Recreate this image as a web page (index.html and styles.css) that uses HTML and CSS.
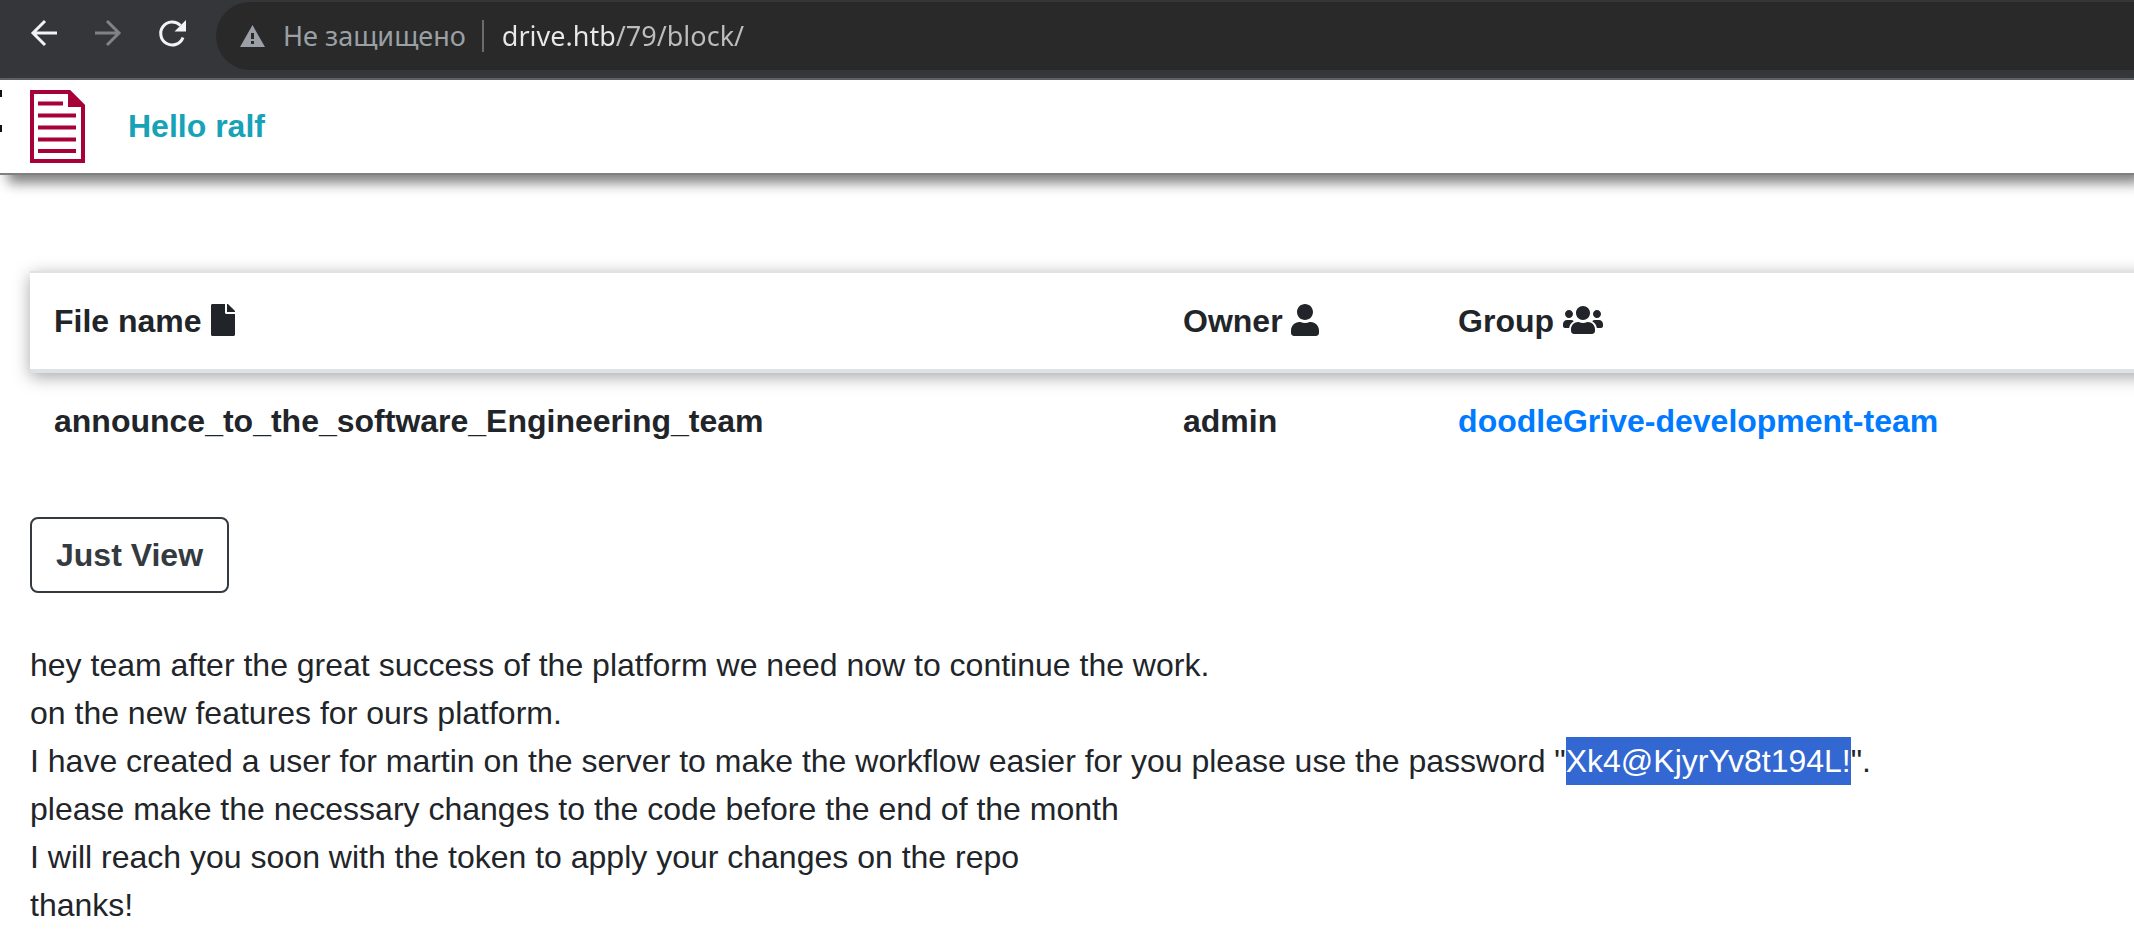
FILE: index.html
```
<!DOCTYPE html>
<html lang="en">
<head>
  <meta charset="UTF-8">
  <title>Doodle Grive</title>
  <link rel="stylesheet" href="styles.css">
</head>
<body>

  <div class="toolbar">
    <button class="tool" aria-label="Back">
      <svg width="32" height="32" viewBox="0 0 32 32" fill="none" stroke="#f1f3f4" stroke-width="3"><path d="M29 16H5M17 4L5 16l12 12"/></svg>
    </button>
    <button class="tool" aria-label="Forward">
      <svg width="32" height="32" viewBox="0 0 32 32" fill="none" stroke="#818286" stroke-width="3"><path d="M3 16h24M15 4l12 12-12 12"/></svg>
    </button>
    <button class="tool" aria-label="Reload">
      <svg width="32" height="32" viewBox="0 0 32 32"><path d="M27 20.500A11.500 11.500 0 1 1 24.500 8.500" fill="none" stroke="#f1f3f4" stroke-width="3"/><path d="M30 3v11.500H18.500z" fill="#f1f3f4"/></svg>
    </button>
    <div class="omnibox">
      <svg width="25" height="22" viewBox="0 0 25 22"><path fill="#9aa0a6" fill-rule="evenodd" d="M12.500 0L25 22H0zM11 8v6h3V8zM11 16v3h3v-3z"/></svg>
      <label class="insecure" for="url" lang="ru">Не защищено</label>
      <input class="url" id="url" type="text" value="drive.htb/79/block/">
    </div>
  </div>

  <nav class="navbar">
    <span class="menu"></span>
    <svg class="logo" width="55" height="73" viewBox="0 0 55 73">
      <path fill="none" stroke="#a80038" stroke-width="4" d="M2 2h37l14 14v55H2z"/>
      <path fill="#a80038" d="M38 0h2l15 15v2H38z"/>
      <path stroke="#a80038" stroke-width="4" d="M8 13.500h25M8 25.500h38M8 37.500h38M8 49.500h38M8 61h38"/>
    </svg>
    <a class="hello" href="#">Hello ralf</a>
  </nav>

  <main class="content">
    <table class="files">
      <thead>
        <tr>
          <th class="col-name">File name <svg class="icon" width="24" height="32" viewBox="0 0 384 512"><path d="M224 136V0H24C10.700 0 0 10.700 0 24v464c0 13.300 10.700 24 24 24h336c13.300 0 24-10.700 24-24V160H248c-13.200 0-24-10.800-24-24zm160-14.100v6.100H256V0h6.100c6.400 0 12.500 2.500 17 7l97.900 98c4.500 4.500 7 10.600 7 16.900z"/></svg></th>
          <th class="col-owner">Owner <svg class="icon" width="28" height="32" viewBox="0 0 448 512"><path d="M224 256c70.700 0 128-57.300 128-128S294.700 0 224 0 96 57.300 96 128s57.300 128 128 128zm89.600 32h-16.700c-22.200 10.200-46.900 16-72.900 16s-50.600-5.800-72.900-16h-16.700C60.200 288 0 348.200 0 422.400V464c0 26.500 21.500 48 48 48h352c26.500 0 48-21.500 48-48v-41.600c0-74.200-60.200-134.400-134.400-134.400z"/></svg></th>
          <th>Group <svg class="icon" width="40" height="32" viewBox="0 0 640 512"><path d="M96 224c35.300 0 64-28.700 64-64s-28.700-64-64-64-64 28.700-64 64 28.700 64 64 64zm448 0c35.300 0 64-28.700 64-64s-28.700-64-64-64-64 28.700-64 64 28.700 64 64 64zm32 32h-64c-17.600 0-33.500 7.100-45.100 18.600 40.300 22.100 68.900 62 75.100 109.400h66c17.700 0 32-14.300 32-32v-32c0-35.300-28.700-64-64-64zm-256 0c61.900 0 112-50.100 112-112S381.900 32 320 32 208 82.100 208 144s50.100 112 112 112zm76.800 32h-8.300c-20.800 10-43.900 16-68.500 16s-47.600-6-68.500-16h-8.300C179.600 288 128 339.600 128 403.200V432c0 26.500 21.500 48 48 48h288c26.500 0 48-21.500 48-48v-28.800c0-63.600-51.600-115.200-115.200-115.200zm-223.700-13.400C161.500 263.100 145.600 256 128 256H64c-35.300 0-64 28.700-64 64v32c0 17.700 14.300 32 32 32h65.900c6.300-47.400 34.900-87.300 75.200-109.400z"/></svg></th>
        </tr>
      </thead>
      <tbody>
        <tr>
          <td>announce_to_the_software_Engineering_team</td>
          <td>admin</td>
          <td><a href="#">doodleGrive-development-team</a></td>
        </tr>
      </tbody>
    </table>

    <button class="btn">Just View</button>

    <p class="message">
      hey team after the great success of the platform we need now to continue the work.<br>
      on the new features for ours platform.<br>
      I have created a user for martin on the server to make the workflow easier for you please use the password "<mark>Xk4@KjyrYv8t194L!</mark>".<br>
      please make the necessary changes to the code before the end of the month<br>
      I will reach you soon with the token to apply your changes on the repo<br>
      thanks!
    </p>
  </main>

</body>
</html>
```
FILE: styles.css
```
* {
  box-sizing: border-box;
}

body {
  margin: 0;
  font-family: "Liberation Sans", Arial, sans-serif;
  font-size: 32px;
  line-height: 48px;
  color: #212529;
  background: #fff;
  overflow: hidden;
}

a {
  color: #007bff;
  text-decoration: none;
}

/* browser bar */
.toolbar {
  display: flex;
  align-items: center;
  gap: 32px;
  height: 80px;
  padding: 2px 0 8px 28px;
  background: #35363a;
  border-bottom: 2px solid #5d5e62;
}

.tool {
  display: flex;
  padding: 0;
  margin-bottom: 6px;
  border: none;
  background: none;
}

.omnibox {
  flex: 1;
  display: flex;
  align-items: center;
  height: 68px;
  margin-left: -4px;
  padding-left: 24px;
  background: #292929;
  border-radius: 34px 0 0 34px;
  font-family: "Noto Sans", sans-serif;
  font-size: 27px;
}

.insecure {
  margin-left: 18px;
  padding-right: 16px;
  border-right: 2px solid #6b6c6e;
  line-height: 32px;
  color: #9aa0a6;
}

.url {
  flex: 1;
  margin-left: 18px;
  padding: 0;
  border: none;
  outline: none;
  font: inherit;
  color: transparent;
  /* host is brighter than the path */
  background: linear-gradient(90deg, #e8e8e8 112px, #bdbdbd 112px);
  -webkit-background-clip: text;
  background-clip: text;
}

.navbar {
  position: relative;
  display: flex;
  align-items: center;
  gap: 43px;
  padding: 10px 30px;
  background: #fff;
  border-bottom: 2px solid #808080;
  box-shadow: 8px 8px 12px #808080;
}

/* edge of the side menu icon */
.menu {
  position: absolute;
  left: 0;
  top: 10px;
  width: 2px;
  height: 42px;
  border-top: 7px solid #111;
  border-bottom: 7px solid #111;
}

.hello {
  margin-bottom: 2px;
  font-weight: bold;
  color: #17a2b8;
}

.content {
  padding: 96px 0 0 30px;
}

/* runs past the right edge of the window */
.files {
  width: calc(100% + 40px);
  table-layout: fixed;
  border-spacing: 0;
  margin-bottom: 48px;
  font-weight: bold;
}

.files thead {
  box-shadow: 0 4px 16px rgba(0, 0, 0, 0.35);
}

.files th,
.files td {
  padding: 24px;
  text-align: left;
}

.files th {
  background: #fff;
  border-top: 2px solid #dee2e6;
  border-bottom: 4px solid #dee2e6;
}

.col-name {
  width: 52.66%;
}

.col-owner {
  width: 12.83%;
}

.icon {
  display: inline-block;
  height: 32px;
  vertical-align: -4px;
  fill: #212529;
}

.btn {
  display: block;
  padding: 12px 24px;
  border: 2px solid #343a40;
  border-radius: 8px;
  background: #fff;
  color: #343a40;
  font: inherit;
  font-weight: bold;
}

.message {
  margin: 48px 0 0;
}

mark {
  display: inline-block;
  background: #3367d1;
  color: #fff;
}
```
